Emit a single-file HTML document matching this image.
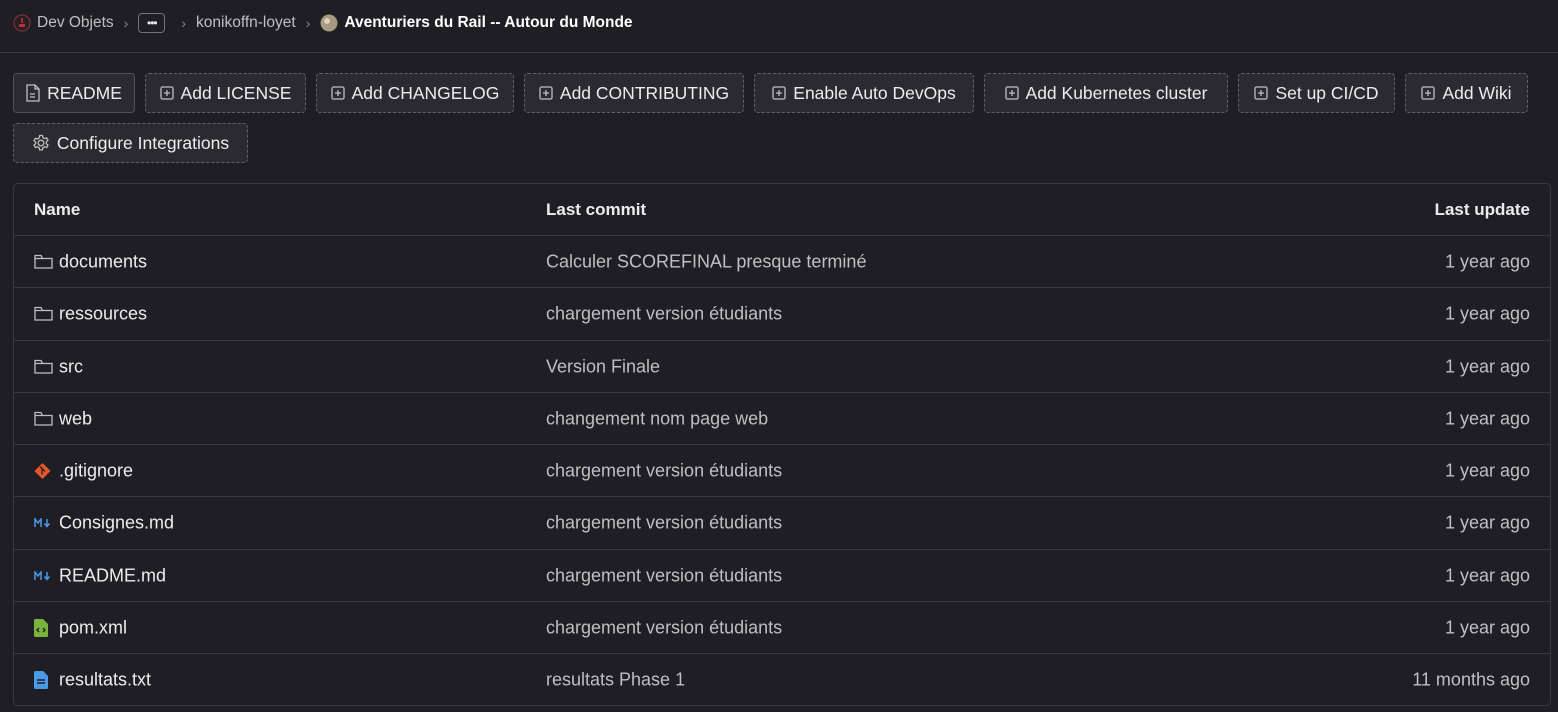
<!DOCTYPE html>
<html><head><meta charset="utf-8"><style>
*{box-sizing:border-box;margin:0;padding:0}
body{width:1558px;height:712px;background:#1f1e24;color:#ececef;font-family:"Liberation Sans",sans-serif;position:relative;overflow:hidden}
.bc{position:absolute;top:12px;left:13px;height:22px;display:flex;align-items:center;font-size:15.5px;color:#bfbfc3}
.bc .sep{margin:0 10px;color:#89888d;font-size:14px}
.dots{border:1px solid #737278;border-radius:4px;width:27px;height:20px;display:inline-flex;align-items:center;justify-content:center;font-size:12px;color:#ececef;letter-spacing:-1px}
.hr{position:absolute;top:52px;left:0;right:0;height:1px;background:#3a383f}
.btn{position:absolute;height:40px;border:1px dashed #626168;border-radius:4px;background:#2b2a30;display:flex;align-items:center;justify-content:center;font-size:17.5px;color:#ececef;gap:7px}
.btn.solid{border-style:solid;border-color:#535158}
.tbl{position:absolute;left:13px;top:183px;width:1538px;height:523px;border:1px solid #3a393f;border-radius:5px}
.row{position:absolute;left:0;right:0;border-top:1px solid #3a393f;font-size:18px}
.row span{position:absolute;top:50%;transform:translateY(-50%);white-space:nowrap}
.c1{left:45px}.c2{left:532px;color:#bfbfc3}.c3{right:20px;color:#bfbfc3}
.hd span{font-weight:bold;color:#ececef!important;font-size:17px}
.ic{position:absolute;left:20px;top:50%;transform:translateY(-50%)}
</style></head><body>
<div class="bc">
<svg width="18" height="18" viewBox="0 0 18 18"><circle cx="9" cy="9" r="8" fill="#2a1c1f" stroke="#7a3438" stroke-width="1.2"/><rect x="6" y="10" width="6" height="3" fill="#b0343a"/><path d="M9 4v5" stroke="#c34" stroke-width="1.5"/></svg>
<span style="margin-left:6px">Dev Objets</span><span class="sep">›</span><span class="dots">•••</span><span class="sep" style="margin-left:16px">›</span><span>konikoffn-loyet</span><span class="sep">›</span>
<svg width="18" height="18" viewBox="0 0 18 18"><circle cx="9" cy="9" r="8.5" fill="#a89a80"/><circle cx="7" cy="7" r="3" fill="#d8d2c0"/></svg>
<span style="margin-left:6px;color:#fff;font-weight:bold;font-size:15.5px">Aventuriers du Rail -- Autour du Monde</span>
</div>
<div class="hr"></div>

<div class="btn solid" style="left:13px;top:73px;width:122px"><svg width="14" height="18" viewBox="0 0 14 18" fill="none" stroke="#bfbfc3" stroke-width="1.3"><path d="M1 1h8l4 4v12H1z M9 1v4h4 M4 10h5 M4 13h5"/></svg>README</div>
<div class="btn" style="left:145px;top:73px;width:161px"><svg width="14" height="14" viewBox="0 0 14 14" fill="none" stroke="#bfbfc3" stroke-width="1.3"><rect x="1" y="1" width="12" height="12" rx="1.5"/><path d="M7 4v6M4 7h6"/></svg>Add LICENSE</div>
<div class="btn" style="left:316px;top:73px;width:198px"><svg width="14" height="14" viewBox="0 0 14 14" fill="none" stroke="#bfbfc3" stroke-width="1.3"><rect x="1" y="1" width="12" height="12" rx="1.5"/><path d="M7 4v6M4 7h6"/></svg>Add CHANGELOG</div>
<div class="btn" style="left:524px;top:73px;width:220px"><svg width="14" height="14" viewBox="0 0 14 14" fill="none" stroke="#bfbfc3" stroke-width="1.3"><rect x="1" y="1" width="12" height="12" rx="1.5"/><path d="M7 4v6M4 7h6"/></svg>Add CONTRIBUTING</div>
<div class="btn" style="left:754px;top:73px;width:220px"><svg width="14" height="14" viewBox="0 0 14 14" fill="none" stroke="#bfbfc3" stroke-width="1.3"><rect x="1" y="1" width="12" height="12" rx="1.5"/><path d="M7 4v6M4 7h6"/></svg>Enable Auto DevOps</div>
<div class="btn" style="left:984px;top:73px;width:244px"><svg width="14" height="14" viewBox="0 0 14 14" fill="none" stroke="#bfbfc3" stroke-width="1.3"><rect x="1" y="1" width="12" height="12" rx="1.5"/><path d="M7 4v6M4 7h6"/></svg>Add Kubernetes cluster</div>
<div class="btn" style="left:1238px;top:73px;width:157px"><svg width="14" height="14" viewBox="0 0 14 14" fill="none" stroke="#bfbfc3" stroke-width="1.3"><rect x="1" y="1" width="12" height="12" rx="1.5"/><path d="M7 4v6M4 7h6"/></svg>Set up CI/CD</div>
<div class="btn" style="left:1405px;top:73px;width:123px"><svg width="14" height="14" viewBox="0 0 14 14" fill="none" stroke="#bfbfc3" stroke-width="1.3"><rect x="1" y="1" width="12" height="12" rx="1.5"/><path d="M7 4v6M4 7h6"/></svg>Add Wiki</div>
<div class="btn" style="left:13px;top:123px;width:235px"><svg width="18" height="18" viewBox="0 0 18 18" fill="none" stroke="#bfbfc3" stroke-width="1.3"><circle cx="9" cy="9" r="2.8"/><path d="M7.6 1.5h2.8l.5 2.2 1.6.9 2.1-.7 1.4 2.4-1.7 1.5v1.8l1.7 1.5-1.4 2.4-2.1-.7-1.6.9-.5 2.2H7.6l-.5-2.2-1.6-.9-2.1.7-1.4-2.4 1.7-1.5V8.2L2 6.7l1.4-2.4 2.1.7 1.6-.9z"/></svg>Configure Integrations</div>

<div class="tbl">
<div class="row hd" style="top:0;height:52px;border-top:none"><span style="left:20px">Name</span><span class="c2">Last commit</span><span class="c3">Last update</span></div>
<div class="row" style="top:51px;height:52px"><svg class="ic" width="19" height="16" viewBox="0 0 19 16" fill="none" stroke="#bfbfc3" stroke-width="1.3"><path d="M1 2.5V14h17V4.5H8.5L7 1.5H1z M1 4.5h7.5"/></svg><span class="c1">documents</span><span class="c2">Calculer SCOREFINAL presque terminé</span><span class="c3">1 year ago</span></div>
<div class="row" style="top:103px;height:53px"><svg class="ic" width="19" height="16" viewBox="0 0 19 16" fill="none" stroke="#bfbfc3" stroke-width="1.3"><path d="M1 2.5V14h17V4.5H8.5L7 1.5H1z M1 4.5h7.5"/></svg><span class="c1">ressources</span><span class="c2">chargement version étudiants</span><span class="c3">1 year ago</span></div>
<div class="row" style="top:156px;height:52px"><svg class="ic" width="19" height="16" viewBox="0 0 19 16" fill="none" stroke="#bfbfc3" stroke-width="1.3"><path d="M1 2.5V14h17V4.5H8.5L7 1.5H1z M1 4.5h7.5"/></svg><span class="c1">src</span><span class="c2">Version Finale</span><span class="c3">1 year ago</span></div>
<div class="row" style="top:208px;height:52px"><svg class="ic" width="19" height="16" viewBox="0 0 19 16" fill="none" stroke="#bfbfc3" stroke-width="1.3"><path d="M1 2.5V14h17V4.5H8.5L7 1.5H1z M1 4.5h7.5"/></svg><span class="c1">web</span><span class="c2">changement nom page web</span><span class="c3">1 year ago</span></div>
<div class="row" style="top:260px;height:52px"><svg class="ic" width="17" height="17" viewBox="0 0 17 17"><path d="M8.5 .5l8 8-8 8-8-8z" fill="#e8572c"/><path d="M6 4l5 5M8 6v6" stroke="#1f1e24" stroke-width="1.3"/></svg><span class="c1">.gitignore</span><span class="c2">chargement version étudiants</span><span class="c3">1 year ago</span></div>
<div class="row" style="top:312px;height:53px"><svg class="ic" width="18" height="10" viewBox="0 0 18 10" fill="none" stroke="#4a9ae8" stroke-width="1.5"><path d="M1 9V1l3 4 3-4v8 M13 1v7 M10.5 5.5l2.5 3 2.5-3"/></svg><span class="c1">Consignes.md</span><span class="c2">chargement version étudiants</span><span class="c3">1 year ago</span></div>
<div class="row" style="top:365px;height:52px"><svg class="ic" width="18" height="10" viewBox="0 0 18 10" fill="none" stroke="#4a9ae8" stroke-width="1.5"><path d="M1 9V1l3 4 3-4v8 M13 1v7 M10.5 5.5l2.5 3 2.5-3"/></svg><span class="c1">README.md</span><span class="c2">chargement version étudiants</span><span class="c3">1 year ago</span></div>
<div class="row" style="top:417px;height:52px"><svg class="ic" width="14" height="18" viewBox="0 0 14 18"><path d="M0 1.5Q0 0 1.5 0H9l5 5v11.5Q14 18 12.5 18h-11Q0 18 0 16.5z" fill="#7ab33e"/><path d="M5 9l-2 2 2 2M9 9l2 2-2 2" stroke="#1f1e24" stroke-width="1.4" fill="none"/></svg><span class="c1">pom.xml</span><span class="c2">chargement version étudiants</span><span class="c3">1 year ago</span></div>
<div class="row" style="top:469px;height:53px"><svg class="ic" width="14" height="18" viewBox="0 0 14 18"><path d="M0 1.5Q0 0 1.5 0H9l5 5v11.5Q14 18 12.5 18h-11Q0 18 0 16.5z" fill="#4a9ae8"/><path d="M3 9h8M3 12h8" stroke="#1f1e24" stroke-width="1.4"/></svg><span class="c1">resultats.txt</span><span class="c2">resultats Phase 1</span><span class="c3">11 months ago</span></div>
</div>
</body></html>
